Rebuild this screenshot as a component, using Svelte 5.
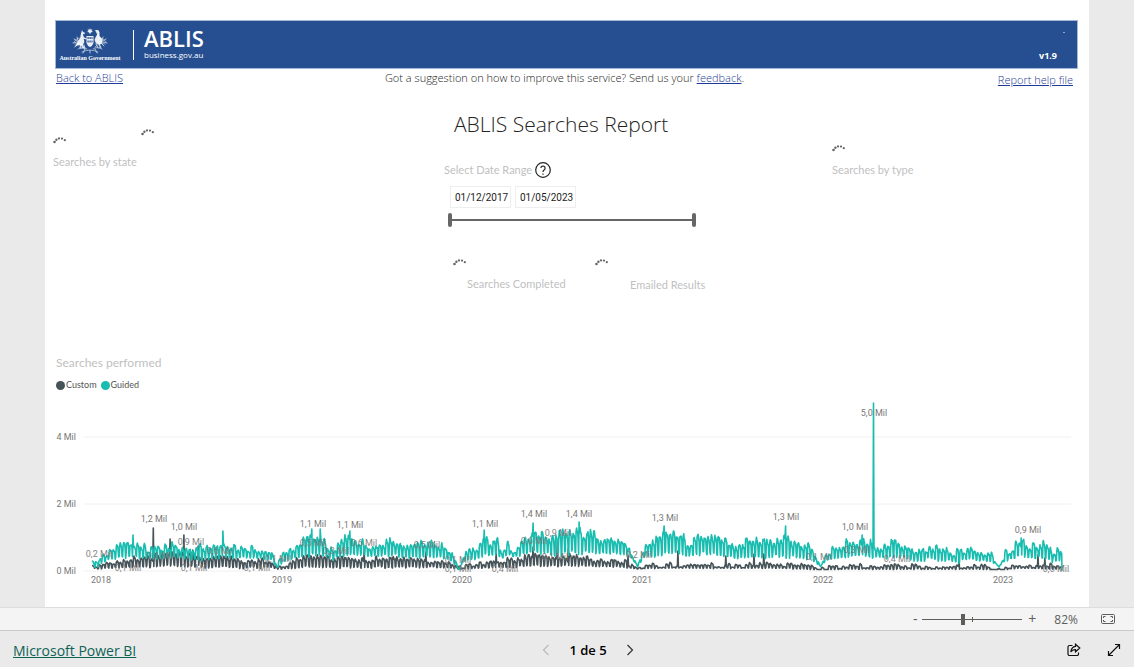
<script>
  let zoom = $state(40);
  let rangeStart = $state(0);
  let rangeEnd = $state(100);
  let dateFrom = $state('01/12/2017');
  let dateTo = $state('01/05/2023');

  // Envelope of each series along the time axis: [x, peak y, trough y].
  const guidedShape = [
    [47, 212, 219], [52, 214, 221], [56, 207, 216], [63, 200, 212], [73, 197, 211], [87, 190, 208], [99, 197, 211],
    [110, 197, 211], [124, 195, 210], [137, 195, 211], [150, 197, 212], [163, 193, 211], [178, 192, 210], [190, 197, 211],
    [200, 195, 210], [217, 200, 211], [227, 203, 213], [232, 217, 221], [240, 201, 213], [247, 198, 211], [255, 192, 209],
    [267, 184, 207], [275, 184, 206], [281, 193, 209], [288, 201, 212], [295, 188, 208], [305, 185, 207], [315, 190, 207],
    [327, 197, 209], [335, 193, 208], [347, 186, 207], [357, 192, 210], [367, 193, 210], [380, 190, 209], [395, 194, 210],
    [405, 198, 212], [413, 217, 221], [421, 200, 213], [430, 199, 212], [439, 185, 208], [446, 191, 208], [452, 187, 206],
    [457, 203, 211], [463, 192, 207], [469, 200, 210], [477, 191, 207], [483, 187, 206], [488, 176, 205], [495, 181, 206],
    [500, 179, 205], [506, 187, 208], [516, 184, 207], [527, 181, 206], [534, 176, 205], [540, 184, 205], [547, 180, 204],
    [557, 187, 206], [567, 187, 206], [575, 192, 206], [585, 197, 209], [593, 215, 220], [600, 196, 209], [610, 192, 208],
    [619, 179, 206], [626, 182, 204], [637, 180, 206], [641, 195, 210], [650, 187, 207], [660, 182, 206], [671, 186, 207],
    [680, 190, 208], [693, 193, 211], [703, 188, 209], [715, 187, 210], [735, 191, 208], [741, 186, 210], [747, 190, 208],
    [755, 192, 210], [765, 196, 212], [771, 206, 215], [775, 217, 220], [781, 202, 213], [790, 197, 211], [800, 193, 210],
    [810, 191, 209], [817, 187, 208], [824, 193, 210], [835, 197, 210], [843, 193, 211], [851, 192, 208], [860, 195, 210],
    [870, 202, 214], [880, 198, 213], [884, 194, 210], [895, 198, 213], [905, 201, 214], [915, 201, 215], [921, 198, 212],
    [935, 198, 213], [945, 202, 214], [954, 215, 219], [961, 202, 213], [968, 197, 211], [976, 190, 209], [985, 194, 210],
    [1001, 192, 210], [1007, 202, 214], [1015, 198, 214], [1017, 200, 215]
  ];
  const customShape = [
    [47, 217, 220], [52, 219, 222], [60, 214, 221], [80, 210, 220], [90, 208, 219], [100, 209, 220], [108, 206, 219],
    [120, 203, 218], [140, 204, 219], [160, 207, 220], [180, 208, 220], [200, 211, 221], [225, 210, 220], [232, 219, 222],
    [245, 213, 221], [258, 208, 220], [270, 204, 219], [285, 209, 220], [300, 207, 220], [320, 211, 221], [335, 208, 220],
    [355, 209, 220], [370, 209, 220], [400, 212, 220], [414, 219, 222], [430, 215, 221], [450, 212, 220], [470, 210, 220],
    [488, 206, 218], [510, 208, 219], [535, 206, 218], [550, 210, 219], [580, 212, 220], [593, 220, 222], [605, 216, 221],
    [640, 215, 221], [690, 216, 221], [735, 215, 221], [765, 217, 222], [775, 220, 223], [800, 216, 222], [850, 216, 222],
    [900, 218, 222], [940, 217, 222], [954, 220, 223], [975, 216, 221], [1017, 216, 222]
  ];
  const guidedSpikes = [[178, 184], [88, 188], [267, 182], [275, 182], [305, 184], [439, 183], [488, 176], [534, 175], [619, 179], [740.5, 179], [817, 188], [976, 191], [828.5, 56]];
  const customSpikes = [[108.5, 181], [125, 192], [139, 188], [153, 199], [148, 203], [319, 203], [381, 205], [451, 206], [488, 200], [512.5, 195], [523, 202], [583, 208], [633, 204], [681, 209], [709, 207], [719, 207], [914, 211], [993, 208], [1000, 211]];

  function envelope(shape, x) {
    let i = 1;
    while (i < shape.length - 1 && shape[i][0] < x) i++;
    const [ax, ah, al] = shape[i - 1];
    const [bx, bh, bl] = shape[i];
    const t = Math.max(0, Math.min(1, (x - ax) / (bx - ax)));
    return [ah + (bh - ah) * t, al + (bl - al) * t];
  }

  function seriesPath(shape, spikes, seed, jitter) {
    let state = seed;
    const random = () => {
      state = (state * 1664525 + 1013904223) % 4294967296;
      return state / 4294967296;
    };
    const weekday = [0.15, 0, 0.1, 0.15, 0.35, 1, 0.95];
    let points = [];
    let weekly = 0;
    for (let day = 0; day < 1964; day++) {
      const x = 47 + day * 0.494;
      if (day % 7 === 0) weekly = random() * jitter;
      const [hi, lo] = envelope(shape, x);
      const spike = spikes.find(([sx]) => Math.abs(sx - x) <= 0.247);
      const level = weekday[day % 7] + (random() - 0.4) * 0.25;
      const y = spike ? spike[1] : Math.min(222.5, hi + weekly + (lo - hi - weekly) * level);
      points.push(`${x.toFixed(1)} ${y.toFixed(1)}`);
    }
    return 'M' + points.join('L');
  }

  const guidedPath = seriesPath(guidedShape, guidedSpikes, 11, 8) + 'L1017 224';
  const customPath = seriesPath(customShape, customSpikes, 29, 5);

  const axis = [[90, '4 Mil'], [157, '2 Mil'], [224, '0 Mil']];
  const years = [[56, '2018'], [237, '2019'], [417, '2020'], [597, '2021'], [778, '2022'], [958, '2023']];
  const peaks = [
    [109, 175, '1,2 Mil'], [139, 183, '1,0 Mil'], [268, 180, '1,1 Mil'], [305, 181, '1,1 Mil'], [440, 180, '1,1 Mil'],
    [489, 170, '1,4 Mil'], [534, 170, '1,4 Mil'], [620, 174, '1,3 Mil'], [741, 173, '1,3 Mil'], [810, 183, '1,0 Mil'],
    [829, 69, '5,0 Mil'], [983, 186, '0,9 Mil']
  ];
  const inner = [
    [54, 210, '0,2 Mil'], [83, 224, '0,1 Mil'], [115, 212, '0,4 Mil'], [146, 198, '0,9 Mil'], [149, 224, '0,1 Mil'],
    [175, 207, '0,6 Mil'], [212, 224, '0,1 Mil'], [233, 215, '0,1 Mil'], [268, 199, '0,5 Mil'], [291, 207, '0,3 Mil'],
    [319, 199, '0,6 Mil'], [382, 201, '0,5 Mil'], [413, 216, '0,1 Mil'], [413, 225, '0,1 Mil'], [460, 225, '0,4 Mil'],
    [489, 197, '0,6 Mil'], [513, 189, '0,9 Mil'], [510, 213, '0,1 Mil'], [594, 211, '0,2 Mil'], [774, 213, '0,1 Mil'],
    [812, 206, '0,3 Mil'], [852, 215, '0,4 Mil'], [1011, 225, '0,0 Mil']
  ];
</script>

{#snippet spinner()}
  <svg class="spinner" viewBox="0 0 14 8" role="img" aria-label="Loading">
    <circle cx="1.5" cy="6" r="1.3" /><circle cx="3.4" cy="3.8" r="1.2" /><circle cx="6" cy="2.4" r="1.1" />
    <circle cx="9" cy="2.6" r="1.1" /><circle cx="11.8" cy="4.2" r="1.1" />
  </svg>
{/snippet}

<div class="app">
  <main class="stage">
    <div class="report">
      <header class="banner">
        <div class="brand">
          <div class="crest">
            <svg viewBox="0 0 36 26" aria-hidden="true">
              <g fill="none" stroke="#fff" stroke-linecap="round" opacity="0.75">
                <path d="M9 10q-5 0-7 4M27 10q5 0 7 4M3 16q5-2 10 3M33 16q-5-2-10 3M6 21q5-3 9 0M30 21q-5-3-9 0M10 24q8-4 16 0" stroke-width=".7" />
                <path d="M2 11l3 2M5 9l1 4M1 15l4-1M4 18l3-3M8 20l1-4M34 11l-3 2M31 9l-1 4M35 15l-4-1M32 18l-3-3M28 20l-1-4M11 25l2-4M25 25l-2-4M18 25v-3" stroke-width=".9" stroke-dasharray="1 .7" />
                <path d="M26 13q2-4-.5-7T25 2.500M24 16l2 4M27 15l2 5M9 16l-1 4 3 0M12 17l1 4" stroke-width="1" />
              </g>
              <g fill="#fff" opacity="0.9">
                <path d="M18 0l.7 1.700 1.800-.5-.9 1.600 1.400 1.200-1.900.2-.2 1.800-.9-1.500-.9 1.500-.2-1.800-1.900-.2 1.400-1.200-.9-1.600 1.800.5z" />
                <path d="M10 2l1 2 2 .8-.5 1.200-1.600.2 1 3 3 1.500-.4.9-2.800-.8.7 3-1.600 3.500 2 3-1 .4-3.400-3.500-3 .3-3.600 2.200 2.600-3.500 1.200-3 2.600-3 .6-4z" />
                <path d="M24.500 2l-1.900.6 1.600.8 1.300 2.600-1.800 3-1.200 2.700 1.500 3.700 3.500 1.200 3-1.500-.5-4.200-2.400-2.900-.1-3.700-1-2z" />
                <path fill-rule="evenodd" d="M14.500 8h7v7q-1 3-3.500 4-2.500-1-3.500-4zM15.500 9v2h1.200V9zM17.500 9v2h1.200V9zM19.500 9v2h1V9zM15.500 12.500v2h1.200v-2zM17.500 12.500v2h1.200v-2zM19.500 12.500v2h1v-2z" />
              </g>
            </svg>
            <span>Australian Government</span>
          </div>
          <div class="product">
            <strong>ABLIS</strong>
            <span>business.gov.au</span>
          </div>
        </div>
        <div class="version"><span class="mark"></span><b>v1.9</b></div>
      </header>

      <nav class="links">
        <a href="#back">Back to ABLIS</a>
        <p>Got a suggestion on how to improve this service? Send us your <a href="#feedback">feedback</a>.</p>
        <a class="help" href="#help">Report help file</a>
      </nav>

      <section class="summary">
        <div class="state">
          <div class="pair">{@render spinner()}{@render spinner()}</div>
          <h2>Searches by state</h2>
        </div>
        <div class="middle">
          <h1>ABLIS Searches Report</h1>
          <div class="range-title">
            <h2>Select Date Range</h2>
            <button class="hint" aria-label="About the date range">
              <svg viewBox="0 0 16 16" aria-hidden="true"><circle cx="8" cy="8" r="7.300" /><path d="M5.900 6.100a2.100 2.100 0 1 1 3.400 1.700Q8 8.700 8 10" /><path d="M8 11.500v1.200" /></svg>
            </button>
          </div>
          <div class="dates">
            <input aria-label="Start date" bind:value={dateFrom} />
            <input aria-label="End date" bind:value={dateTo} />
          </div>
          <div class="slider">
            <input type="range" aria-label="Range start" bind:value={rangeStart} />
            <input type="range" aria-label="Range end" bind:value={rangeEnd} />
          </div>
          <div class="cards">
            <div>{@render spinner()}<h2>Searches Completed</h2></div>
            <div>{@render spinner()}<h2>Emailed Results</h2></div>
          </div>
        </div>
        <div class="type">
          {@render spinner()}
          <h2>Searches by type</h2>
        </div>
      </section>

      <section class="performed">
        <h2>Searches performed</h2>
        <ul class="legend">
          <li><i class="custom"></i>Custom</li>
          <li><i class="guided"></i>Guided</li>
        </ul>
        <svg class="chart" viewBox="0 50 1044 194" role="img" aria-label="Searches performed by date">
          {#each axis as [y, label]}
            <line class="grid" x1="39" x2="1026" y1={y} y2={y} />
            <text class="axis" x="31" y={y + 3} text-anchor="end">{label}</text>
          {/each}
          <path class="line custom-line" d={customPath} />
          <path class="line guided-line" d={guidedPath} />
          {#each inner as [x, y, label]}
            <text class="label faint" {x} {y} text-anchor="middle">{label}</text>
          {/each}
          {#each peaks as [x, y, label]}
            <text class="label" {x} {y} text-anchor="middle">{label}</text>
          {/each}
          {#each years as [x, label]}
            <text class="axis" {x} y="236" text-anchor="middle">{label}</text>
          {/each}
        </svg>
      </section>
    </div>
  </main>

  <div class="zoombar">
    <button aria-label="Zoom out">-</button>
    <input type="range" aria-label="Zoom" bind:value={zoom} />
    <button aria-label="Zoom in">+</button>
    <span class="percent">82%</span>
    <button class="fit" aria-label="Fit to page">
      <svg viewBox="0 0 14 10" aria-hidden="true"><rect x=".5" y=".5" width="13" height="9" rx="1" /><path d="M4.500 2.500h-2v1.500M2.500 6v1.500h2M9.500 2.500h2v1.500M11.500 6v1.500h-2" /></svg>
    </button>
  </div>

  <footer class="footer">
    <a href="#powerbi">Microsoft Power BI</a>
    <div class="pager">
      <button disabled aria-label="Previous page"><svg viewBox="0 0 8 12" aria-hidden="true"><path d="M6.500 1L1.500 6l5 5" /></svg></button>
      <span>1 de 5</span>
      <button aria-label="Next page"><svg viewBox="0 0 8 12" aria-hidden="true"><path d="M1.500 1l5 5-5 5" /></svg></button>
    </div>
    <div class="actions">
      <button aria-label="Share">
        <svg viewBox="0 0 14 14" aria-hidden="true"><path d="M5.500 2.500h-3a1.500 1.500 0 0 0-1.500 1.500v7a1.500 1.500 0 0 0 1.500 1.500h7.500a1.500 1.500 0 0 0 1.500-1.500v-1.500" /><path d="M8.500 1.200l4.300 3.800-4.300 3.800V6.700Q5.500 6.500 3.800 9 4.500 3.700 8.500 3.400z" /></svg>
      </button>
      <button aria-label="Full screen">
        <svg viewBox="0 0 14 14" aria-hidden="true"><path d="M8 1.500h4.500V6M12.500 1.500l-11 11M1.500 8v4.500H6" /></svg>
      </button>
    </div>
  </footer>
</div>

<style>
  :global(body) { margin: 0; }
  .app {
    display: flex;
    flex-direction: column;
    min-height: 100vh;
    background: #eaeaea;
    color: #252423;
    font-family: "Open Sans", "Noto Sans", sans-serif;
    font-size: 11px;
  }
  h1, h2, p, ul { margin: 0; padding: 0; }
  button { padding: 0; border: 0; background: none; color: inherit; font: inherit; }
  svg { display: block; }
  input { box-sizing: border-box; margin: 0; }

  .stage { flex: 1; padding: 0 45px; }
  .report { height: 100%; box-sizing: border-box; padding-top: 20px; background: #fff; }
  .banner {
    display: flex;
    justify-content: space-between;
    box-sizing: border-box;
    height: 49px;
    margin: 0 11px 0 10px;
    border: 1px solid #a3b8d6;
    background: #254f90;
    color: #fff;
  }
  .brand { display: flex; align-items: center; }
  .crest { display: flex; flex-direction: column; align-items: center; width: 68px; font: 700 6px/8px "Liberation Serif", serif; white-space: nowrap; }
  .crest svg { width: 36px; height: 26px; }
  .product { display: flex; flex-direction: column; margin-left: 9px; padding-left: 10px; border-left: 1px solid #fff; }
  .product strong { font-size: 22px; font-weight: 600; line-height: 16px; padding-bottom: 4px; }
  .product span { font-size: 8px; line-height: 10px; }
  .version { display: flex; flex-direction: column; align-items: flex-end; justify-content: space-between; padding: 11px 12px 5px 0; }
  .version b { margin-right: 8px; font-size: 9px; line-height: 14px; }
  .mark { width: 2px; height: 1px; background: #8ea6ca; }

  .links { display: grid; grid-template-columns: 1fr auto 1fr; margin: 0 16px 0 11px; font-size: 11px; font-weight: 300; line-height: 18px; }
  .links a { color: #1f3b97; }
  .links .help { justify-self: end; padding-top: 2px; }

  .summary { display: grid; grid-template-columns: 399px 1fr 257px; height: 265px; }
  h2 { color: #bfbfbf; font: 400 11px/16px Lato, sans-serif; white-space: nowrap; }
  .spinner { width: 14px; height: 8px; fill: #666; }
  .state { padding: 39px 0 0 8px; }
  .pair { display: flex; gap: 74px; margin-bottom: 10px; }
  .pair > :global(svg:first-child) { margin-top: 8px; }
  .type { padding: 55px 0 0; }
  .type h2 { margin-top: 10px; }
  h1 { padding: 20px 0 0 10px; font-size: 21px; font-weight: 300; line-height: 30px; }
  .range-title { display: flex; align-items: center; gap: 3px; margin-top: 23px; }
  .hint { width: 16px; height: 16px; }
  .hint svg { fill: none; stroke: #222; stroke-width: 1.2; }
  .dates { display: flex; gap: 4px; margin: 8px 0 0 6px; }
  .dates input { width: 61px; height: 22px; padding: 0 0 0 4px; border: 1px solid #eee; color: #222; font: 10px Roboto, sans-serif; }
  .slider { display: grid; width: 248px; height: 14px; margin: 5px 0 0 4px; background: linear-gradient(#666, #666) center / 240px 2px no-repeat; }
  .slider input { grid-area: 1 / 1; width: 100%; height: 14px; appearance: none; background: none; pointer-events: none; }
  .slider input::-webkit-slider-thumb { appearance: none; width: 4px; height: 14px; border-radius: 2px; background: #666; pointer-events: auto; }
  .cards { display: grid; grid-template-columns: 142px 1fr; margin: 31px 0 0 9px; }
  .cards h2 { margin: 10px 0 0 14px; }
  .cards div + div h2 { margin: 11px 0 0 35px; }

  .performed { padding-bottom: 16px; }
  .performed h2 { padding-left: 11px; font-size: 12px; line-height: 18px; }
  .legend { display: flex; gap: 4px; margin: 6px 0 5px 11px; color: #555; font: 9px/14px Lato, sans-serif; list-style: none; }
  .legend li { display: flex; align-items: center; gap: 1px; }
  .legend i { width: 9px; height: 9px; border-radius: 50%; }
  .custom { background: #465358; }
  .guided { background: #18bdb0; }
  .chart { width: 100%; height: auto; }
  .grid { stroke: #f0f0f0; stroke-width: 1; }
  .axis, .label { fill: #777; font: 9px Roboto, sans-serif; }
  .faint { opacity: 0.9; }
  .line { fill: none; stroke-width: 1.600; stroke-linejoin: round; }
  .custom-line { stroke: #465358; }
  .guided-line { stroke: #18bdb0; }

  .zoombar { display: flex; align-items: center; justify-content: flex-end; box-sizing: border-box; height: 24px; padding-right: 19px; border-top: 1px solid #ddd; border-bottom: 1px solid #c8c8c8; background: #f4f4f4; color: #605e5c; font-size: 12px; }
  .zoombar button { width: 10px; font-size: 14px; line-height: 20px; }
  .zoombar input { width: 100px; height: 12px; margin: 0 5px 0 2px; appearance: none; background: linear-gradient(#605e5c, #605e5c) center / 100% 1px no-repeat, linear-gradient(#605e5c, #605e5c) center / 1px 5px no-repeat; }
  .zoombar input::-webkit-slider-thumb { appearance: none; width: 4px; height: 11px; background: #605e5c; }
  .percent { margin: 0 23px 0 17px; }
  .zoombar .fit { width: 14px; }
  .fit svg { fill: none; stroke: #605e5c; }

  .footer { display: grid; grid-template-columns: 1fr auto 1fr; align-items: center; height: 36px; padding: 2px 13px 0; box-sizing: border-box; }
  .footer a { color: #0f6355; font-size: 14px; }
  .pager { display: flex; align-items: center; gap: 19px; padding-left: 42px; color: #000; font-size: 13px; font-weight: 600; }
  .pager svg { width: 8px; height: 12px; fill: none; stroke: #333; stroke-width: 1.200; }
  .pager button:disabled svg { stroke: #bbb; }
  .actions { display: flex; justify-content: flex-end; gap: 26px; }
  .actions svg { width: 14px; height: 14px; fill: none; stroke: #111; stroke-width: 1.200; }
</style>
